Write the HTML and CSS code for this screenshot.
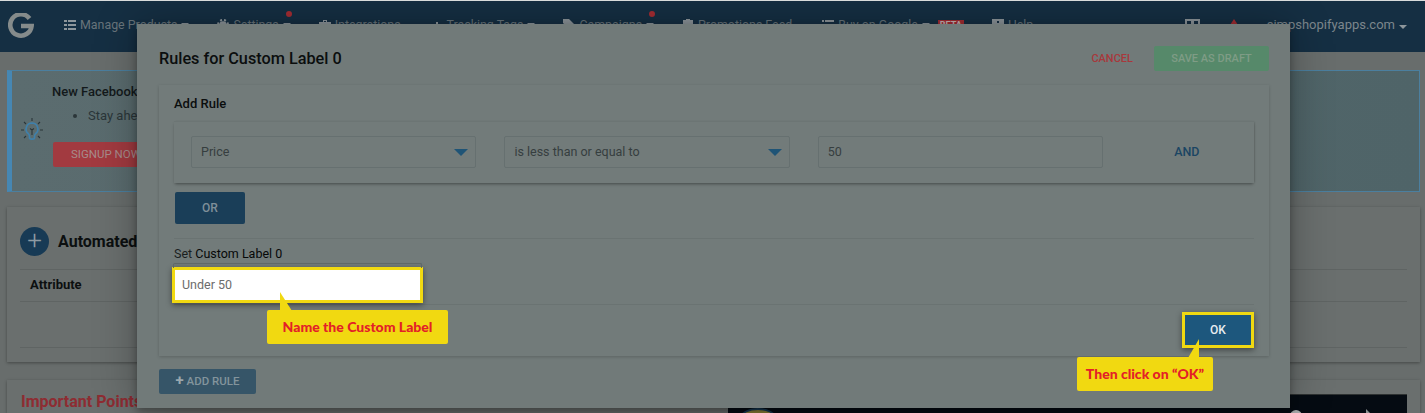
FILE: index.html
```html
<!DOCTYPE html>
<html lang="en">
<head>
  <meta charset="UTF-8">
  <title>Rules for Custom Label 0</title>
  <link rel="stylesheet" href="styles.css">
</head>
<body>
  <!-- page behind the dialog -->
  <header class="topbar">
    <svg class="logo" viewBox="0 0 26 26" fill="none" stroke="#858b8b" stroke-width="4.600">
      <path d="M21.500 5.500A10.700 10.700 0 1 0 23.600 13H13"/>
    </svg>
    <nav class="nav-list">
      <a class="nav-item"><svg class="nav-icon" viewBox="0 0 12 12"><path d="M0 1h3v2H0zM4 1h8v2H4zM0 5h3v2H0zM4 5h8v2H4zM0 9h3v2H0zM4 9h8v2H4z"/></svg>Manage Products<i class="caret"></i></a>
      <a class="nav-item has-dot"><svg class="nav-icon" viewBox="0 0 12 12"><circle cx="6" cy="6" r="3.800"/><circle class="gear-teeth" cx="6" cy="6" r="5"/></svg>Settings<i class="caret"></i></a>
      <a class="nav-item wide"><svg class="nav-icon" viewBox="0 0 12 12"><path d="M4 1h4v2h4v8H0V3h4zM5 2v1h2V2z" fill-rule="evenodd"/></svg>Integrations</a>
      <a class="nav-item"><svg class="nav-icon" viewBox="0 0 12 12"><path d="M1 6h2v5H1zM5 3h2v8H5zM9 7h2v4H9z"/></svg>Tracking Tags<i class="caret"></i></a>
      <a class="nav-item has-dot"><svg class="nav-icon" viewBox="0 0 12 12"><path d="M0 0h6l6 6-5 5-7-7z"/></svg>Campaigns<i class="caret"></i></a>
      <a class="nav-item wide"><svg class="nav-icon" viewBox="0 0 12 12"><path d="M1 1h3V0h4v1h3v11H1z"/></svg>Promotions Feed</a>
      <a class="nav-item"><svg class="nav-icon" viewBox="0 0 12 12"><path d="M0 1h2v2H0zM3 1h9v2H3zM0 5h2v2H0zM3 5h9v2H3zM0 9h2v2H0zM3 9h9v2H3z"/></svg>Buy on Google<i class="caret"></i><b class="beta">BETA</b></a>
      <a class="nav-item"><svg class="nav-icon" viewBox="0 0 12 12"><path d="M0 0h12v12H0zM5 2v2h2V2z" fill-rule="evenodd"/></svg>Help</a>
    </nav>
    <div class="nav-right">
      <svg class="nav-icon card-icon" viewBox="0 0 15 12"><path d="M0 0h15v12H0zM2 2v4h4V2zM9 2v4h4V2z" fill-rule="evenodd"/></svg>
      <svg class="nav-icon bell-icon" viewBox="0 0 12 12"><path d="M6 0l4 6v4H2V6z"/></svg>
      <a class="account">simpshopifyapps.com<i class="caret"></i></a>
    </div>
  </header>

  <main class="content">
    <section class="notice">
      <svg class="bulb" viewBox="0 0 24 26" fill="none">
        <path stroke="#3f80ab" stroke-width="1.700" d="M12 5a6 6 0 0 0-3.500 10.800c.8.700 1 1.600 1 2.700v1.500c0 1.500 5 1.500 5 0v-1.500c0-1.100.2-2 1-2.700A6 6 0 0 0 12 5z"/>
        <path stroke="#2b3639" stroke-width="1.100" d="M12 17v-5l-2-1.500M12 12l2-1.500M12 0v3M1 12h3M20 12h3M4 4l2 2M20 4l-2 2M4 20l2-2M20 20l-2-2"/>
      </svg>
      <div class="notice-body">
        <h4>New Facebook</h4>
        <ul><li>Stay ahead</li></ul>
        <a class="signup">SIGNUP NOW</a>
      </div>
    </section>

    <section class="card rules-card">
      <div class="card-head">
        <span class="round-plus">+</span>
        <h3>Automated</h3>
      </div>
      <div class="card-row"><b>Attribute</b></div>
      <div class="card-row empty"></div>
    </section>

    <section class="card points-card">
      <h3>Important Points</h3>
      <div class="video">
        <i class="video-arc"></i>
        <i class="video-dot"></i>
        <i class="video-play"></i>
      </div>
    </section>
  </main>

  <!-- dialog -->
  <div class="modal">
    <div class="modal-head">
      <h2>Rules for Custom Label 0</h2>
      <a class="cancel">CANCEL</a>
      <a class="save-draft">SAVE AS DRAFT</a>
    </div>

    <div class="panel">
      <h5>Add Rule</h5>
      <div class="rule-row">
        <div class="field select">Price<i class="select-arrow"></i></div>
        <div class="field select">is less than or equal to<i class="select-arrow"></i></div>
        <div class="field">50</div>
        <a class="and-link">AND</a>
      </div>
      <a class="or-btn">OR</a>
      <hr class="rule-line">
      <label class="label-title">Set <span>Custom Label 0</span></label>
      <div class="label-input">Under 50</div>
      <hr class="rule-line bottom-line">

      <a class="ok-btn">OK</a>

      <div class="callout name-callout">Name the Custom Label</div>
      <div class="callout ok-callout">Then click on “OK”</div>
    </div>

    <a class="add-rule"><b>+</b> ADD RULE</a>
  </div>
</body>
</html>
```

FILE: styles.css
```css
* {
  box-sizing: border-box;
}

html {
  height: 413px;
  overflow: hidden;
}

body {
  margin: 0;
  height: 413px;
  overflow: hidden;
  position: relative;
  background-color: #686d6c;
  font-family: Roboto, "Liberation Sans", sans-serif;
  border-top: 1px solid #d9dcdc;
}

/* top bar */
.topbar {
  display: flex;
  align-items: center;
  height: 51px;
  padding: 0 0 4px 8px;
  background-color: #152f43;
  color: #68747b;
  font-size: 12.400px;
}

.logo {
  width: 26px;
  height: 26px;
  margin: 2px 30px 0 0;
}

.nav-list {
  display: flex;
  gap: 28px;
}

.nav-item {
  display: flex;
  align-items: center;
  position: relative;
  white-space: nowrap;
}

.nav-item.wide {
  margin-right: 2px;
}

.nav-icon {
  width: 12px;
  height: 12px;
  margin-right: 4px;
  fill: #8d969b;
}

.gear-teeth {
  fill: none;
  stroke: #8d969b;
  stroke-width: 2;
  stroke-dasharray: 2 2;
}

.caret {
  display: inline-block;
  margin-left: 4px;
  border-left: 4px solid transparent;
  border-right: 4px solid transparent;
  border-top: 4px solid #8d969b;
}

.has-dot::after {
  content: "";
  position: absolute;
  right: -1px;
  top: -6px;
  width: 6px;
  height: 6px;
  border-radius: 50%;
  background-color: #a52d33;
}

.beta {
  margin-left: 8px;
  padding: 0 2px;
  font-size: 9px;
  background-color: #a52d33;
  color: #c9b5b5;
}

.nav-right {
  display: flex;
  align-items: center;
  margin-left: auto;
  padding-right: 18px;
}

.card-icon {
  width: 15px;
  margin-right: 28px;
}

.bell-icon {
  fill: #a52d33;
  margin-right: 27px;
}

.account {
  font-size: 13px;
  color: #7c868c;
}

/* page content */
.content {
  padding: 18px 5px 0 7px;
}

.notice {
  display: flex;
  align-items: center;
  height: 122px;
  background: linear-gradient(90deg, #5b6c6f, #4f6468);
  border: 1px solid #4b7f9f;
  border-left: 5px solid #4687b3;
}

.bulb {
  width: 24px;
  height: 26px;
  margin-left: 8px;
}

.notice-body {
  align-self: flex-start;
  margin: 13px 0 0 8px;
  font-size: 13px;
  color: #2b3639;
}

.notice-body h4 {
  margin: 0;
  font-size: 13px;
  font-weight: 500;
  color: #13191b;
}

.notice-body ul {
  margin: 9px 0 19px;
  padding-left: 36px;
}

.signup {
  display: block;
  width: 110px;
  height: 25px;
  line-height: 25px;
  margin-left: 1px;
  padding-left: 18px;
  font-size: 11.500px;
  color: #a78c8c;
  background-color: #a23a40;
  border-radius: 2px;
}

.card {
  background-color: #6a6f6e;
  box-shadow: 0 1px 3px rgba(0, 0, 0, 0.35);
  padding: 0 13px;
}

.rules-card {
  margin-top: 15px;
  height: 155px;
}

.card-head {
  display: flex;
  align-items: center;
  gap: 9px;
  height: 63px;
  padding-top: 7px;
  border-bottom: 1px solid #5f6463;
}

.card-head h3 {
  margin: 0;
  font-size: 16px;
  font-weight: 700;
  color: #0c0f10;
}

.round-plus {
  width: 29px;
  height: 29px;
  line-height: 26px;
  border-radius: 50%;
  text-align: center;
  font-size: 26px;
  font-weight: 300;
  background-color: #173a55;
  color: #8d9aa3;
}

.card-row {
  height: 32px;
  padding: 7px 10px 0;
  font-size: 13px;
  color: #0c0f10;
  border-bottom: 1px solid #5f6463;
}

.card-row.empty {
  height: 46px;
}

.points-card {
  margin-top: 18px;
  height: 33px;
  position: relative;
  overflow: hidden;
}

.points-card h3 {
  margin: 0;
  padding: 12px 0 0 1px;
  font-size: 16px;
  font-weight: 700;
  color: #8e2c32;
}

.video {
  position: absolute;
  left: 721px;
  right: 13px;
  top: 14px;
  height: 19px;
  overflow: hidden;
  background-color: #050b12;
  border-top: 1px solid #2e3232;
}

.video-arc {
  position: absolute;
  left: 14px;
  top: 15px;
  width: 32px;
  height: 16px;
  border-radius: 50%;
  background-color: #8d8237;
  box-shadow: 0 0 0 2px #173a55;
}

.video-dot {
  position: absolute;
  left: 562px;
  top: 15px;
  width: 12px;
  height: 12px;
  border-radius: 50%;
  background-color: #a9adad;
}

.video-play {
  position: absolute;
  left: 638px;
  top: 14px;
  border-top: 6px solid transparent;
  border-bottom: 6px solid transparent;
  border-left: 6px solid #8b9090;
}

/* dialog, lies over the page */
.modal {
  position: absolute;
  left: 137px;
  top: 23px;
  width: 1153px;
  height: 384px;
  padding: 0 21px 0 22px;
  background-color: #717a79;
  box-shadow: 0 0 40px rgba(0, 0, 0, 0.3), 0 4px 8px rgba(0, 0, 0, 0.3);
}

.modal-head {
  display: flex;
  align-items: center;
  height: 61px;
  padding-top: 8px;
}

.modal-head h2 {
  margin: 0 auto 0 0;
  font-size: 16.250px;
  font-weight: 500;
  color: #0b0e0e;
}

.cancel {
  font-size: 11px;
  font-weight: 500;
  color: #a8383c;
  margin-right: 21px;
}

.save-draft {
  width: 115px;
  height: 25px;
  line-height: 25px;
  text-align: center;
  font-size: 11px;
  font-weight: 500;
  color: #7f9c86;
  background-color: #56896a;
  border-radius: 2px;
}

.panel {
  position: relative;
  height: 271px;
  padding: 0 15px;
  background-color: #727b7a;
  box-shadow: 0 1px 3px rgba(0, 0, 0, 0.18);
}

.panel h5 {
  margin: 0;
  padding-top: 11px;
  font-size: 13px;
  font-weight: 500;
  color: #0b0e0e;
  height: 36px;
}

.rule-row {
  display: flex;
  align-items: center;
  gap: 28px;
  height: 62px;
  padding: 0 0 2px 17px;
  border-top: 1px solid #6c7574;
  box-shadow: 0 2px 3px -1px rgba(0, 0, 0, 0.4), 1px 0 2px -1px rgba(0, 0, 0, 0.25);
}

.field {
  position: relative;
  width: 285.400px;
  height: 32px;
  line-height: 30px;
  padding-left: 9px;
  font-size: 12.500px;
  color: #363e3f;
  border: 1px solid #667070;
  border-radius: 2px;
}

.select-arrow {
  position: absolute;
  right: 7px;
  top: 12px;
  border-left: 7px solid transparent;
  border-right: 7px solid transparent;
  border-top: 7px solid #1f5476;
}

.and-link {
  margin-left: 43px;
  font-size: 12.500px;
  font-weight: 500;
  color: #1b4563;
}

.or-btn {
  display: block;
  width: 70px;
  height: 32px;
  line-height: 32px;
  margin: 9px 0 0 1px;
  text-align: center;
  font-size: 12px;
  font-weight: 500;
  color: #7f8f99;
  background-color: #1a3e58;
  border-radius: 2px;
}

.rule-line {
  margin: 14px 0 0;
  border: none;
  border-top: 1px solid #6a7372;
}

.label-title {
  display: block;
  margin-top: 7px;
  font-size: 12.500px;
  color: #1a1f1f;
}

.label-title span {
  color: #060808;
}

.label-input {
  position: absolute;
  left: 13px;
  top: 182px;
  width: 251px;
  height: 36px;
  line-height: 30px;
  padding-left: 7px;
  font-size: 12.500px;
  color: #6c6c6c;
  background-color: #fff;
  border: 3px solid #f1d911;
  box-shadow: 0 2px 6px rgba(0, 0, 0, 0.45);
}

.label-input::before {
  content: "";
  position: absolute;
  left: -2px;
  right: -2px;
  top: -7px;
  height: 4px;
  border: 1px solid #5f6868;
  border-bottom: none;
  border-radius: 2px 2px 0 0;
}

.bottom-line {
  margin-top: 43px;
}

.ok-btn {
  position: absolute;
  right: 15px;
  top: 227px;
  width: 72px;
  height: 36px;
  line-height: 30px;
  text-align: center;
  font-size: 12px;
  font-weight: 500;
  color: #e8edf0;
  background-color: #1d577d;
  border: 3px solid #f1d911;
  box-shadow: 0 2px 6px rgba(0, 0, 0, 0.45);
}

.callout {
  position: absolute;
  height: 34px;
  line-height: 34px;
  text-align: center;
  font-family: Lato, "Open Sans", sans-serif;
  font-size: 14px;
  font-weight: 900;
  white-space: nowrap;
  color: #e32028;
  background-color: #f1d911;
  border-radius: 2px;
}

.callout::before {
  content: "";
  position: absolute;
  height: 19px;
  background-color: #f1d911;
}

.name-callout {
  left: 108px;
  top: 225px;
  width: 181px;
}

.name-callout::before {
  left: 13px;
  top: -18px;
  width: 12px;
  clip-path: polygon(0 0, 100% 100%, 0 100%);
}

.ok-callout {
  left: 918px;
  top: 272px;
  width: 136px;
}

.ok-callout::before {
  left: 111px;
  top: -18px;
  width: 11px;
  clip-path: polygon(100% 0, 100% 100%, 0 100%);
}

.add-rule {
  display: block;
  width: 97px;
  height: 25px;
  line-height: 25px;
  margin-top: 13px;
  text-align: center;
  font-size: 11.500px;
  font-weight: 500;
  color: #83949c;
  background-color: #365568;
  border-radius: 2px;
}

.add-rule b {
  font-size: 15px;
  line-height: 1;
  color: #9aa7ae;
}
```
